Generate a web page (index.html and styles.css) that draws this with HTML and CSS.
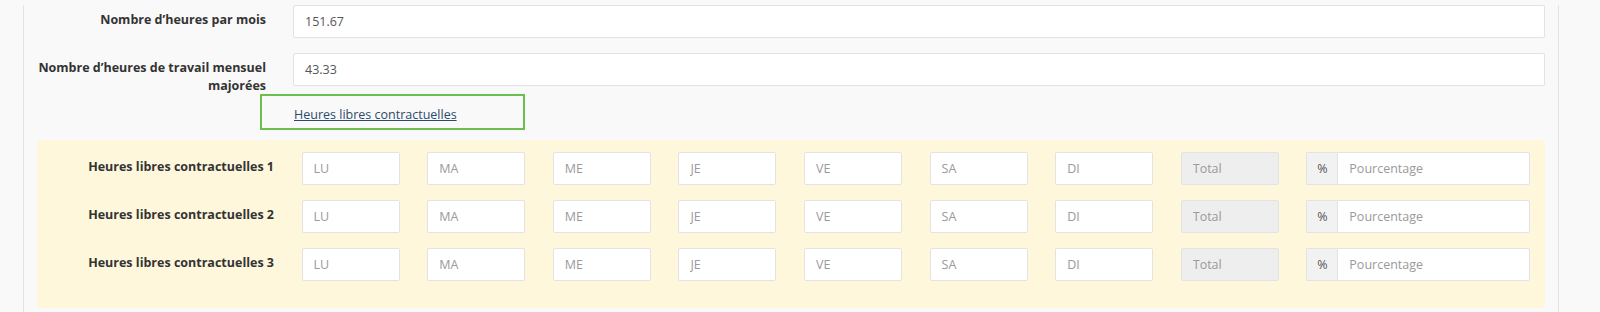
FILE: index.html
```html
<!DOCTYPE html>
<html lang="fr">
<head>
  <meta charset="UTF-8" />
  <meta name="viewport" content="width=device-width, initial-scale=1" />
  <title>Heures</title>
  <link rel="stylesheet" href="styles.css">
</head>
<body>

  <div class="panel">
    <div class="form-row first">
      <label for="hours-month">Nombre d’heures par mois</label>
      <input type="text" id="hours-month" value="151.67" />
    </div>

    <div class="form-row">
      <label for="hours-extra">Nombre d’heures de travail mensuel majorées</label>
      <input type="text" id="hours-extra" value="43.33" />
    </div>

    <div class="toggle-box">
      <a href="#" class="toggle-link">Heures libres contractuelles</a>
    </div>

    <div class="free-hours">
      <div class="hours-row">
        <label>Heures libres contractuelles 1</label>
        <input type="text" placeholder="LU" />
        <input type="text" placeholder="MA" />
        <input type="text" placeholder="ME" />
        <input type="text" placeholder="JE" />
        <input type="text" placeholder="VE" />
        <input type="text" placeholder="SA" />
        <input type="text" placeholder="DI" />
        <input type="text" placeholder="Total" class="total" readonly />
        <div class="input-group">
          <span class="addon">%</span>
          <input type="text" placeholder="Pourcentage" />
        </div>
      </div>

      <div class="hours-row">
        <label>Heures libres contractuelles 2</label>
        <input type="text" placeholder="LU" />
        <input type="text" placeholder="MA" />
        <input type="text" placeholder="ME" />
        <input type="text" placeholder="JE" />
        <input type="text" placeholder="VE" />
        <input type="text" placeholder="SA" />
        <input type="text" placeholder="DI" />
        <input type="text" placeholder="Total" class="total" readonly />
        <div class="input-group">
          <span class="addon">%</span>
          <input type="text" placeholder="Pourcentage" />
        </div>
      </div>

      <div class="hours-row">
        <label>Heures libres contractuelles 3</label>
        <input type="text" placeholder="LU" />
        <input type="text" placeholder="MA" />
        <input type="text" placeholder="ME" />
        <input type="text" placeholder="JE" />
        <input type="text" placeholder="VE" />
        <input type="text" placeholder="SA" />
        <input type="text" placeholder="DI" />
        <input type="text" placeholder="Total" class="total" readonly />
        <div class="input-group">
          <span class="addon">%</span>
          <input type="text" placeholder="Pourcentage" />
        </div>
      </div>
    </div>
  </div>

</body>
</html>
```

FILE: styles.css
```css
body {
  margin: 0;
  background: #f9f9f9;
  font-family: "Open Sans", "Liberation Sans", sans-serif;
  font-size: 12.5px;
  color: #333;
}
.panel {
  margin-left: 23px;
  width: 1536px;
  height: 312px;
  box-sizing: border-box;
  border-left: 1px solid #e4e4e4;
  border-right: 1px solid #e4e4e4;
}
input {
  height: 33px;
  padding: 0 11px;
  box-sizing: border-box;
  border: 1px solid #e3e3e3;
  border-radius: 2px;
  background: #fff;
  font-family: inherit;
  font-size: 12.5px;
  color: #555;
  outline: none;
}
input::placeholder {
  color: #9a9a9a;
}
label {
  font-weight: 700;
  line-height: 18px;
  text-align: right;
  color: #333;
}

/* top fields */
.form-row {
  display: flex;
  align-items: flex-start;
  gap: 27px;
  padding-right: 13px;
  margin-top: 15px;
}
.form-row.first {
  margin-top: 5px;
}
.form-row label {
  width: 242px;
  flex: none;
  padding-top: 6px;
}
.form-row input {
  flex: 1;
}

/* toggle link */
.toggle-box {
  width: 265px;
  height: 36px;
  margin: -1px 0 0 236px;
  padding: 10px 0 0 32px;
  box-sizing: border-box;
  border: 2px solid #6cbf4f;
}
.toggle-link {
  color: #2c4a6b;
  line-height: 18px;
}

/* free hours block */
.free-hours {
  margin: 10px 13px 0;
  padding: 12px 0 27px;
  background: #fef7dc;
  border-radius: 4px;
}
.hours-row {
  display: grid;
  grid-template-columns: 237px repeat(8, 98px) 224px;
  column-gap: 27.6px;
  margin-bottom: 15px;
}
.hours-row:last-child {
  margin-bottom: 0;
}
.hours-row label {
  padding-top: 6px;
}
.hours-row input {
  width: 100%;
}
.total {
  background: #eeeeee;
}
.input-group {
  display: flex;
}
.addon {
  width: 31px;
  height: 33px;
  box-sizing: border-box;
  border: 1px solid #e3e3e3;
  border-right: none;
  border-radius: 2px 0 0 2px;
  background: #f2f2f2;
  color: #555;
  text-align: center;
  line-height: 31px;
}
.input-group input {
  flex: 1;
  border-radius: 0 2px 2px 0;
}
```
